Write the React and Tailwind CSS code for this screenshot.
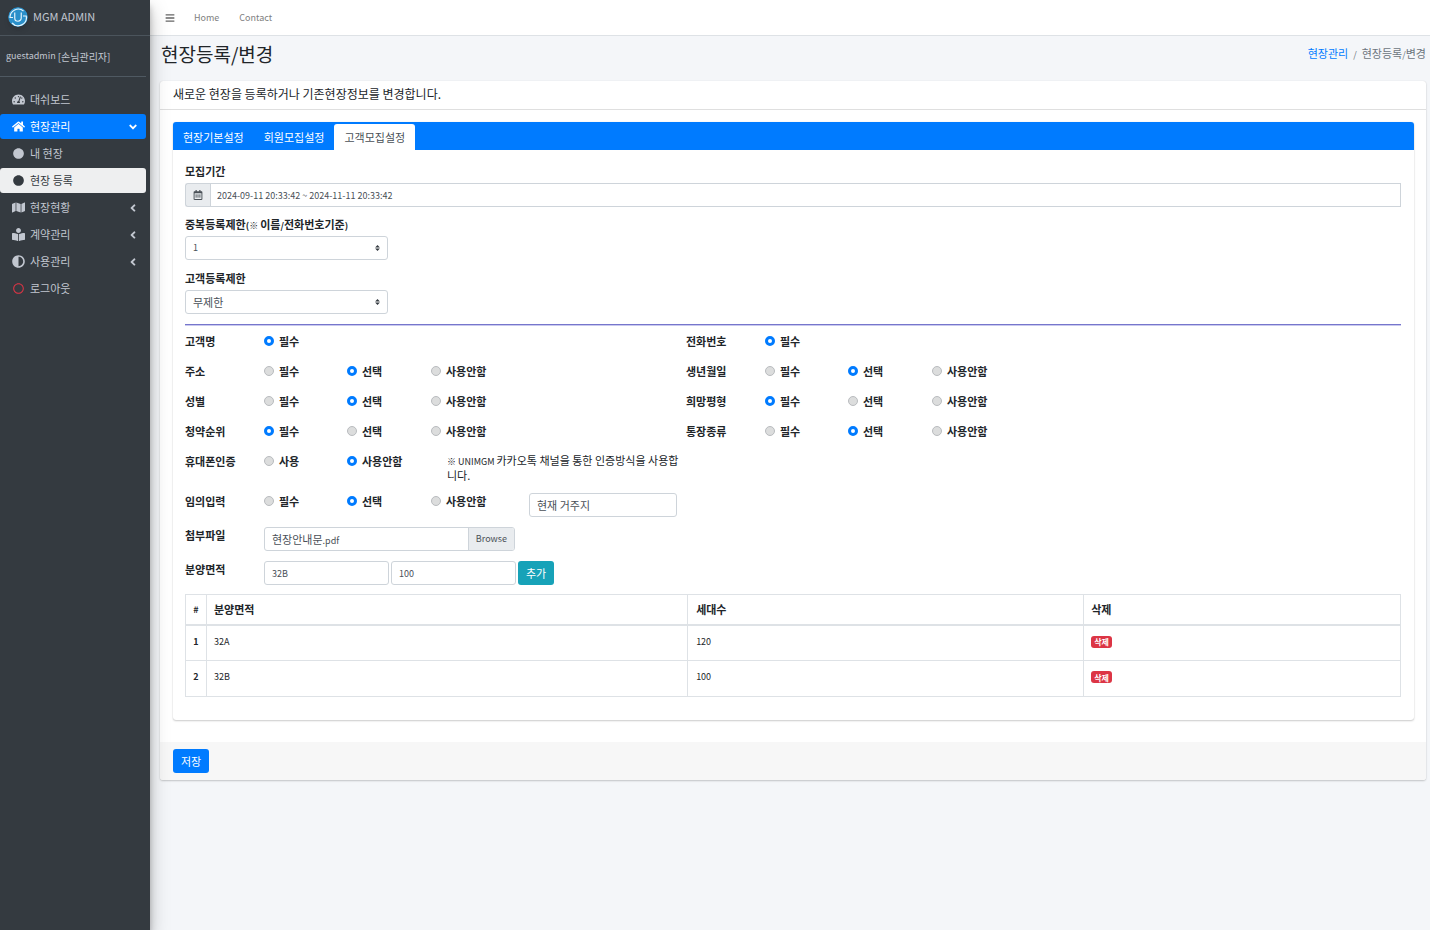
import React, { useState } from "react";
import {
  FaAdjust,
  FaAngleDown,
  FaAngleLeft,
  FaBars,
  FaBookReader,
  FaCircle,
  FaHome,
  FaMap,
  FaRegCalendarAlt,
  FaRegCircle,
  FaTachometerAlt,
} from "react-icons/fa";

const menus = [
  { name: "대쉬보드", Icon: FaTachometerAlt },
  { name: "현장관리", Icon: FaHome, state: "open" },
  { name: "내 현장", Icon: FaCircle },
  { name: "현장 등록", Icon: FaCircle, state: "current" },
  { name: "현장현황", Icon: FaMap, arrow: true },
  { name: "계약관리", Icon: FaBookReader, arrow: true },
  { name: "사용관리", Icon: FaAdjust, arrow: true },
  { name: "로그아웃", Icon: FaRegCircle, danger: true },
];

const three = ["필수", "선택", "사용안함"];

const fields = [
  { id: "name", title: "고객명", options: ["필수"], value: "필수" },
  { id: "phone", title: "전화번호", options: ["필수"], value: "필수" },
  { id: "address", title: "주소", options: three, value: "선택" },
  { id: "birth", title: "생년월일", options: three, value: "선택" },
  { id: "gender", title: "성별", options: three, value: "선택" },
  { id: "size", title: "희망평형", options: three, value: "필수" },
  { id: "rank", title: "청약순위", options: three, value: "필수" },
  { id: "account", title: "통장종류", options: three, value: "선택" },
];

const inputClass =
  "h-6 rounded-[3px] border border-[#ced4da] bg-white px-[7px] text-[#495057] outline-none";

const Logo = () => (
  <svg viewBox="0 0 40 40" className="size-5 rounded-full shadow-md" aria-hidden="true">
    <circle cx="20" cy="20" r="20" fill="#2a8fca" />
    <g fill="none" stroke="#e3f4fc" strokeWidth="2.4">
      <path d="M31 8A16.500 16.500 0 0 0 4 21H10" />
      <path d="M13.500 11V22a6.500 6.500 0 0 0 13 0V11" />
      <path d="M30 18H36.500A16.500 16.500 0 0 1 8 32" />
    </g>
  </svg>
);

const Sidebar = () => (
  <aside className="z-10 w-[150px] shrink-0 bg-[#343a40] text-[#c2c7d0] shadow-[0_9px_18px_rgba(0,0,0,0.25),0_6px_6px_rgba(0,0,0,0.22)]">
    <a href="#" className="flex h-9 items-center gap-[5px] border-b border-[#4b545c] pb-0.5 pl-2 text-[11px]">
      <Logo />
      MGM ADMIN
    </a>
    <p className="mr-1 mb-2.5 flex h-[41px] items-center gap-0.5 border-b border-[#4f5962] pl-1.5 text-[10px]">
      <span className="text-[9px]">guestadmin</span>
      <span>[손님관리자]</span>
    </p>
    <nav className="mr-1 flex flex-col gap-0.5">
      {menus.map(({ name, Icon, state, arrow, danger }) => (
        <a
          key={name}
          href="#"
          className={`flex h-[25px] items-center gap-[5px] rounded-[3px] pr-[7px] pl-3 ${
            state === "open" ? "bg-[#007bff] text-white" : state === "current" ? "bg-[#eeeff0] text-[#343a40]" : ""
          }`}
        >
          <span className="flex w-[13px] justify-center">
            <Icon className={danger ? "size-[11px] text-[#dc3545]" : Icon === FaCircle ? "size-[11px]" : "size-[13px]"} />
          </span>
          <span className="grow">{name}</span>
          {arrow && <FaAngleLeft className="size-3" />}
          {state === "open" && <FaAngleDown className="size-3" />}
        </a>
      ))}
    </nav>
  </aside>
);

// latin text and symbols sit smaller next to hangul
const Small = ({ children }) => <span className="text-[9px] leading-none">{children}</span>;

const RadioOption = ({ name, text, checked, onChange }) => (
  <label className="flex items-center gap-[5px] font-bold">
    <input
      type="radio"
      name={name}
      checked={checked}
      onChange={onChange}
      className="size-2.5 appearance-none rounded-full border border-[#b9bcbf] bg-[#dcdddd] checked:border-[3px] checked:border-[#007bff] checked:bg-white"
    />
    {text}
  </label>
);

const RadioRow = ({ id, title, options, value, children }) => {
  const [picked, setPicked] = useState(value);
  return (
    <div
      role="radiogroup"
      aria-label={title}
      className="grid grid-cols-[79px_83px_84px_83px_1fr] items-start leading-4"
    >
      <b>{title}</b>
      {options.map((o) => (
        <RadioOption key={o} name={id} text={o} checked={picked === o} onChange={() => setPicked(o)} />
      ))}
      {children}
    </div>
  );
};

const SelectBox = ({ id, title, options, children }) => (
  <div className="mb-2.5">
    <label htmlFor={id} className="mb-1 block font-bold leading-4">{title}{children}</label>
    <div className="relative w-[203px]">
      <select id={id} className={`${inputClass} block w-full appearance-none ${options[0] === "1" ? "text-[9px]" : ""}`}>
        {options.map((o) => (
          <option key={o}>{o}</option>
        ))}
      </select>
      <svg viewBox="0 0 4 5" className="pointer-events-none absolute top-[9px] right-2 h-1.5 w-[5px]" aria-hidden="true">
        <path fill="#343a40" d="M2 0L0 2h4zm0 5L0 3h4z" />
      </svg>
    </div>
  </div>
);

const AreaTable = ({ rows, onDelete }) => (
  <table className="mt-[9px] w-full table-fixed border border-[#dee2e6] text-left">
    <thead>
      <tr className="h-[30px] border-b-2 border-[#dee2e6]">
        <th className="w-[21px] border-r border-[#dee2e6] text-center text-[9px]">#</th>
        <th className="w-[39.6%] border-r border-[#dee2e6] px-[7px]">분양면적</th>
        <th className="w-[32.6%] border-r border-[#dee2e6] px-2">세대수</th>
        <th className="px-[7px]">삭제</th>
      </tr>
    </thead>
    <tbody className="text-[9px]">
      {rows.map((row, i) => (
        <tr key={row.area} className="h-9 border-b border-[#dee2e6] align-top leading-4">
          <th className="border-r border-[#dee2e6] pt-2 text-center">{i + 1}</th>
          <td className="border-r border-[#dee2e6] px-[7px] pt-2">{row.area}</td>
          <td className="border-r border-[#dee2e6] px-2 pt-2">{row.count}</td>
          <td className="px-[7px] pt-2.5">
            <button
              type="button"
              onClick={() => onDelete(row.area)}
              className="block h-3 rounded-[3px] bg-[#dc3545] px-[3px] text-[8px] leading-[11px] font-bold text-white"
            >
              삭제
            </button>
          </td>
        </tr>
      ))}
    </tbody>
  </table>
);

const App = () => {
  const [rows, setRows] = useState([
    { area: "32A", count: "120" },
    { area: "32B", count: "100" },
  ]);
  const [area, setArea] = useState("32B");
  const [count, setCount] = useState("100");

  const addRow = () => {
    if (!area || rows.some((r) => r.area === area)) return;
    setRows([...rows, { area, count }]);
  };

  return (
    <div className="flex min-h-screen bg-[#f4f6f9] font-['Noto_Sans_CJK_KR',sans-serif] text-[11px] text-[#212529]">
      <Sidebar />
      <div className="min-w-0 grow">
        <header className="flex h-9 items-center border-b border-[#dee2e6] bg-white pl-[15px] text-[9px] text-[#808080]">
          <button type="button" aria-label="메뉴" className="text-[#666666]">
            <FaBars className="size-2.5" />
          </button>
          <a href="#" className="ml-[19px]">Home</a>
          <a href="#" className="ml-5">Contact</a>
        </header>

        <main className="pr-1 pl-2.5">
          <div className="flex h-[45px] items-start justify-between pt-1 pl-px">
            <h1 className="text-[19px] leading-7">현장등록/변경</h1>
            <nav className="flex items-baseline gap-[5px] pt-[5px] leading-4 text-[#6c757d]">
              <a href="#" className="text-[#007bff]">현장관리</a>
              <Small>/</Small>
              <span>현장등록<Small>/</Small>변경</span>
            </nav>
          </div>

          <section className="rounded-[3px] bg-white shadow-[0_0_1px_rgba(0,0,0,0.13),0_1px_2px_rgba(0,0,0,0.2)]">
            <h2 className="h-[29px] border-b border-[#dfdfdf] px-[13px] text-xs leading-[26px]">
              새로운 현장을 등록하거나 기존현장정보를 변경합니다.
            </h2>

            <div className="pt-3 pr-3 pb-[22px] pl-[13px]">
              <div className="rounded-[3px] shadow-[0_0_1px_rgba(0,0,0,0.13),0_1px_2px_rgba(0,0,0,0.2)]">
                <div role="tablist" className="flex h-7 items-end rounded-t-[3px] bg-[#007bff] text-white">
                  <button type="button" role="tab" className="h-[26px] px-2.5">현장기본설정</button>
                  <button type="button" role="tab" className="h-[26px] px-2.5">회원모집설정</button>
                  <button type="button" role="tab" aria-selected="true" className="h-[26px] rounded-t-[3px] bg-white px-2.5 text-[#495057]">
                    고객모집설정
                  </button>
                </div>

                <div className="pt-[13px] pr-[13px] pb-[23px] pl-3">
                  <label htmlFor="period" className="mb-1 block font-bold leading-4">모집기간</label>
                  <div className="mb-[9px] flex">
                    <span className="flex h-6 w-[25px] items-center justify-center rounded-l-[3px] border border-r-0 border-[#ced4da] bg-[#e9ecef] text-[#495057]">
                      <FaRegCalendarAlt className="size-2.5" />
                    </span>
                    <input
                      id="period"
                      defaultValue="2024-09-11 20:33:42 ~ 2024-11-11 20:33:42"
                      className="h-6 min-w-0 grow border border-[#ced4da] px-1.5 text-[9px] text-[#495057] outline-none"
                    />
                  </div>
                  <SelectBox id="dup" title="중복등록제한" options={["1", "2", "3"]}>
                    <Small>(※ </Small>이름<Small>/</Small>전화번호기준<Small>)</Small>
                  </SelectBox>
                  <SelectBox id="limit" title="고객등록제한" options={["무제한", "제한"]} />

                  <hr className="mb-[7px] h-0.5 border-t border-b border-t-[#7676cc] border-b-[#c9c9ee]" />

                  <div className="grid grid-cols-[501px_1fr] gap-y-3.5">
                    {fields.map((f) => (
                      <RadioRow key={f.id} {...f} />
                    ))}
                  </div>

                  <div className="mt-3.5 flex w-[496px] flex-col gap-2.5">
                    <RadioRow id="auth" title="휴대폰인증" options={["사용", "사용안함"]} value="사용안함">
                      <p className="col-span-2 ml-4 leading-[15px]">
                        <Small>※ UNIMGM </Small>카카오톡 채널을 통한 인증방식을 사용합니다.
                      </p>
                    </RadioRow>
                    <RadioRow id="custom" title="임의입력" options={three} value="선택">
                      <input aria-label="임의입력 항목" defaultValue="현재 거주지" className={`${inputClass} ml-[15px] w-[148px]`} />
                    </RadioRow>
                    <div className="flex items-start">
                      <b className="w-[79px] leading-4">첨부파일</b>
                      <label className="flex h-6 w-[251px] items-center overflow-hidden rounded-[3px] border border-[#ced4da] text-[#495057]">
                        <input type="file" className="sr-only" />
                        <span className="grow px-[7px]">현장안내문<Small>.pdf</Small></span>
                        <span className="flex h-full items-center border-l border-[#ced4da] bg-[#e9ecef] px-[7px] text-[9px]">
                          Browse
                        </span>
                      </label>
                    </div>
                    <div className="flex items-start gap-0.5 text-[9px]">
                      <b className="w-[77px] text-[11px] leading-4">분양면적</b>
                      <input
                        aria-label="분양면적"
                        value={area}
                        onChange={(e) => setArea(e.target.value)}
                        className={`${inputClass} w-[125px]`}
                      />
                      <input
                        aria-label="세대수"
                        value={count}
                        onChange={(e) => setCount(e.target.value)}
                        className={`${inputClass} w-[125px]`}
                      />
                      <button type="button" onClick={addRow} className="h-6 rounded-[3px] bg-[#17a2b8] px-2 text-[11px] text-white">
                        추가
                      </button>
                    </div>
                  </div>

                  <AreaTable rows={rows} onDelete={(a) => setRows(rows.filter((r) => r.area !== a))} />
                </div>
              </div>
            </div>

            <div className="rounded-b-[3px] bg-[#f7f7f7] px-[13px] py-[7px]">
              <button type="button" className="block h-6 rounded-[3px] bg-[#007bff] px-2 text-white">저장</button>
            </div>
          </section>
        </main>
      </div>
    </div>
  );
};

export default App;
